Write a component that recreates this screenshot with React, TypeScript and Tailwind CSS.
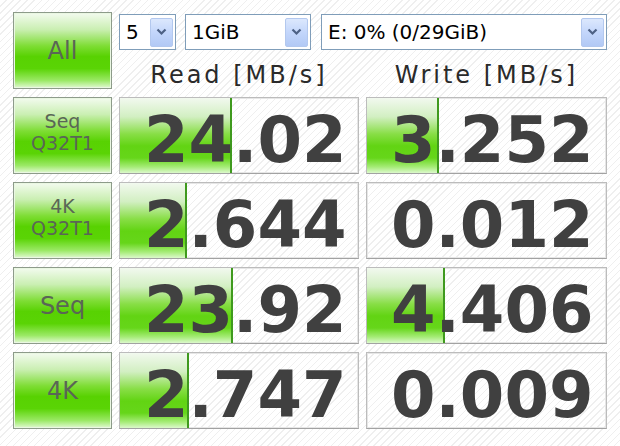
import type { ReactNode } from 'react'

const ROWS = [
  { label: ['Seq', 'Q32T1'], read: '24.02', readBar: 112, write: '3.252', writeBar: 72 },
  { label: ['4K', 'Q32T1'], read: '2.644', readBar: 67, write: '0.012', writeBar: 0 },
  { label: ['Seq'], read: '23.92', readBar: 113, write: '4.406', writeBar: 78 },
  { label: ['4K'], read: '2.747', readBar: 69, write: '0.009', writeBar: 0 },
]

function GreenButton({ children, className = '' }: { children: ReactNode; className?: string }) {
  return (
    <div
      className={`flex flex-col items-center justify-center border border-[#8d9b8a] shadow-[inset_0_0_0_1px_#eaf7e2] bg-[linear-gradient(to_bottom,#f3fbef_0%,#caefb2_22%,#7edd34_44%,#58d202_58%,#5ad405_74%,#9be966_90%,#e2f9d4_100%)] text-[#5a6656] ${className}`}
    >
      {children}
    </div>
  )
}

function Select({ value, className = '' }: { value: string; className?: string }) {
  return (
    <div className={`flex items-center justify-between h-[36px] bg-white border border-[#7f9db9] pl-[6px] pr-[2px] ${className}`}>
      <span className="text-[20px] leading-none text-black">{value}</span>
      <div className="flex items-center justify-center w-[23px] h-[29px] rounded-[2px] border border-[#b3c8ee] bg-[linear-gradient(to_bottom,#dce8fd_0%,#c3d6fb_50%,#b2c9f5_100%)]">
        <svg width="11" height="8" viewBox="0 0 11 8">
          <path d="M1.5 1.5 L5.5 5.5 L9.5 1.5" fill="none" stroke="#4d6185" strokeWidth="2.2" />
        </svg>
      </div>
    </div>
  )
}

function ValueCell({ value, bar }: { value: string; bar: number }) {
  return (
    <div className="relative h-[77px] border border-[#bcbcbc] border-b-[#a2a2a2] shadow-[inset_0_0_0_1px_#e6e6e6]">
      {bar > 0 && (
        <div
          className="absolute left-0 top-0 bottom-0 border-r-2 border-[#3f9a1e] bg-[linear-gradient(to_bottom,#f2f9ef_0%,#d2efc2_25%,#88de46_48%,#62d413_64%,#66d61a_80%,#a6ec78_92%,#dcf8cc_100%)]"
          style={{ width: bar }}
        />
      )}
      <div className="relative pl-[24px] pt-[10px] text-[64px] leading-[64px] font-bold text-[#404040]">
        {value}
      </div>
    </div>
  )
}

export default function App() {
  return (
    <div className="w-[620px] h-[446px] overflow-hidden pt-3 pl-[13px] font-['DejaVu_Sans',sans-serif] bg-[repeating-linear-gradient(135deg,#ffffff_0px,#ffffff_4px,#efefef_4px,#efefef_5px)]">
      <div className="flex gap-x-[7px]">
        <GreenButton className="w-[99px] h-[77px]">
          <span className="text-[24px] leading-none">All</span>
        </GreenButton>
        <div className="flex flex-col w-[488px]">
          <div className="flex mt-[2px]">
            <Select value="5" className="w-[57px]" />
            <Select value="1GiB" className="w-[126px] ml-[9px]" />
            <Select value="E: 0% (0/29GiB)" className="w-[286px] ml-[10px]" />
          </div>
          <div className="flex gap-x-[7px] pt-[13px] text-[24px] leading-[24px] tracking-[3px] text-[#2a2a2a]">
            <div className="w-[240px] text-center">Read [MB/s]</div>
            <div className="w-[241px] text-center">Write [MB/s]</div>
          </div>
        </div>
      </div>

      <div className="flex flex-col gap-y-2 mt-2">
        {ROWS.map((row, i) => (
          <div key={i} className="grid grid-cols-[99px_240px_241px] gap-x-[7px]">
            <GreenButton className="h-[77px]">
              {row.label.length > 1 ? (
                <div className="flex flex-col items-center pb-[8px] text-[19px] leading-[22px]">
                  {row.label.map((l) => (
                    <span key={l}>{l}</span>
                  ))}
                </div>
              ) : (
                <span className="text-[24px] leading-none">{row.label[0]}</span>
              )}
            </GreenButton>
            <ValueCell value={row.read} bar={row.readBar} />
            <ValueCell value={row.write} bar={row.writeBar} />
          </div>
        ))}
      </div>
    </div>
  )
}
